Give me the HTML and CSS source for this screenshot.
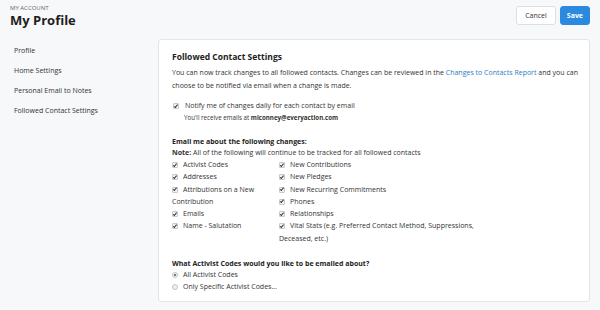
FILE: index.html
```html
<!DOCTYPE html>
<html lang="en">
<head>
  <meta charset="UTF-8" />
  <meta name="viewport" content="width=device-width, initial-scale=1.0" />
  <title>My Profile</title>
  <link rel="stylesheet" href="styles.css">
</head>
<body>
  <div class="page">
    <header class="top">
      <div>
        <div class="eyebrow">My Account</div>
        <h1>My Profile</h1>
      </div>
      <div class="actions">
        <button class="btn">Cancel</button>
        <button class="btn btn-primary">Save</button>
      </div>
    </header>

    <div class="layout">
      <nav class="side">
        <a href="#">Profile</a>
        <a href="#">Home Settings</a>
        <a href="#">Personal Email to Notes</a>
        <a href="#">Followed Contact Settings</a>
      </nav>

      <section class="card">
        <h2>Followed Contact Settings</h2>
        <p class="intro">
          You can now track changes to all followed contacts. Changes can be reviewed in the
          <a href="#">Changes to Contacts Report</a> and you can choose to be notified via email when a change is made.
        </p>

        <div class="notify">
          <span class="check"></span>Notify me of changes daily for each contact by email
        </div>
        <div class="hint">You'll receive emails at <strong>miconney@everyaction.com</strong></div>

        <h3>Email me about the following changes:</h3>
        <div class="note"><strong>Note:</strong> All of the following will continue to be tracked for all followed contacts</div>

        <div class="options">
          <div class="col">
            <div class="opt"><span class="check"></span>Activist Codes</div>
            <div class="opt"><span class="check"></span>Addresses</div>
            <div class="opt"><span class="check"></span>Attributions on a New Contribution</div>
            <div class="opt"><span class="check"></span>Emails</div>
            <div class="opt"><span class="check"></span>Name - Salutation</div>
          </div>
          <div class="col">
            <div class="opt"><span class="check"></span>New Contributions</div>
            <div class="opt"><span class="check"></span>New Pledges</div>
            <div class="opt"><span class="check"></span>New Recurring Commitments</div>
            <div class="opt"><span class="check"></span>Phones</div>
            <div class="opt"><span class="check"></span>Relationships</div>
            <div class="opt"><span class="check"></span>Vital Stats (e.g. Preferred Contact Method, Suppressions, Deceased, etc.)</div>
          </div>
        </div>

        <h3 class="codes-title">What Activist Codes would you like to be emailed about?</h3>
        <div class="opt"><span class="radio on"></span>All Activist Codes</div>
        <div class="opt"><span class="radio"></span>Only Specific Activist Codes...</div>
      </section>
    </div>
  </div>
</body>
</html>
```

FILE: styles.css
```css
body {
  margin: 0;
  font-family: 'Open Sans', sans-serif;
  font-size: 7px;
  background: #f7f8fa;
  color: #333;
}

.page {
  padding: 5px 10px 0 10px;
}

.top {
  display: flex;
  justify-content: space-between;
  align-items: flex-start;
  height: 34px;
}

.eyebrow {
  font-size: 6px;
  line-height: 6px;
  text-transform: uppercase;
  color: #666;
}

h1 {
  margin: 1px 0 0;
  font-size: 13px;
  line-height: 16px;
  color: #1e1e1e;
}

.actions {
  display: flex;
  gap: 4px;
  margin-top: 1px;
}

.btn {
  font-family: inherit;
  font-size: 7px;
  height: 19px;
  padding: 0 8px;
  border: 1px solid #dcdfe3;
  border-radius: 3px;
  background: #fff;
  color: #333;
}

.btn-primary {
  padding: 0 6px;
  background: #2b8ae0;
  border-color: #2b8ae0;
  color: #fff;
  font-weight: bold;
}

.layout {
  display: flex;
}

.side {
  width: 144px;
  padding: 2px 0 0 4px;
  display: flex;
  flex-direction: column;
}

.side a {
  color: #333;
  text-decoration: none;
  line-height: 20px;
}

.card {
  flex: 1;
  background: #fff;
  border: 1px solid #e3e5e8;
  border-radius: 3px;
  padding: 11px 8px 10px 13px;
  height: 263px;
  box-sizing: border-box;
}

h2 {
  margin: 0 0 3px;
  font-size: 8.5px;
  line-height: 12px;
  color: #222;
}

.intro {
  margin: 0 0 8px;
  line-height: 13px;
}

.intro a {
  color: #2d7cc4;
  text-decoration: none;
}

.notify {
  line-height: 12px;
  padding-left: 1px;
}

.notify .check {
  margin-right: 6px;
}

.hint {
  font-size: 6.2px;
  line-height: 12px;
  padding-left: 12px;
  margin-bottom: 12px;
}

h3 {
  margin: 0;
  font-size: 7px;
  line-height: 11px;
  color: #222;
}

.note {
  line-height: 12px;
}

.options {
  display: grid;
  grid-template-columns: 107px 205px;
}

.opt {
  line-height: 12.3px;
}

.check {
  display: inline-block;
  position: relative;
  width: 4px;
  height: 4px;
  border: 1px solid #c9c9c9;
  background: #f1f1f1;
  border-radius: 1px;
  margin: 0 5px 0 0;
  vertical-align: -1px;
}

.check::after {
  content: '';
  position: absolute;
  left: 1px;
  top: -0.5px;
  width: 1.3px;
  height: 2.7px;
  border: solid #333;
  border-width: 0 1px 1px 0;
  transform: rotate(40deg);
}

.codes-title {
  margin-top: 13px;
}

.radio {
  display: inline-block;
  position: relative;
  width: 4px;
  height: 4px;
  border: 1px solid #c6c6c6;
  background: #eee;
  border-radius: 50%;
  margin: 0 5px 0 0;
  vertical-align: -1px;
}

.radio.on::after {
  content: '';
  position: absolute;
  left: 1px;
  top: 1px;
  width: 2px;
  height: 2px;
  border-radius: 50%;
  background: #555;
}
```
